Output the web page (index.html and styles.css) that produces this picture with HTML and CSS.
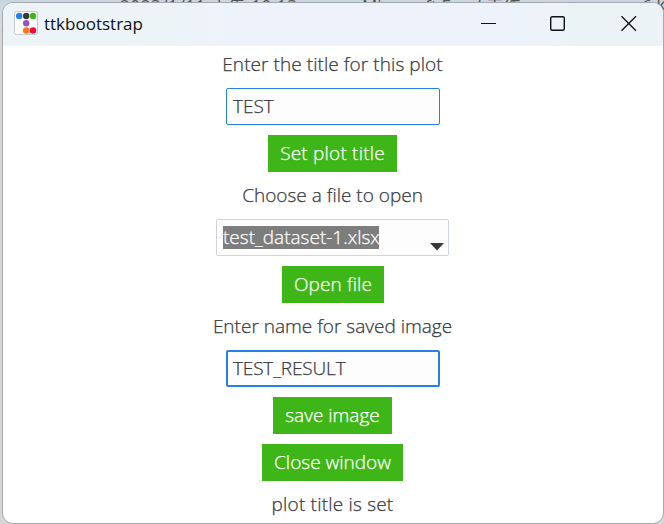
FILE: index.html
```html
<!DOCTYPE html>
<html lang="en">
<head>
<meta charset="utf-8">
<title>ttkbootstrap</title>
<link rel="stylesheet" href="styles.css">
</head>
<body>
<div class="behind date">2023/1/11 下午 10:13</div>
<div class="behind kind">Microsoft Excel 工作...</div>
<div class="behind size">6 KB</div>
<main class="window">
  <header class="titlebar">
    <svg class="logo" width="24" height="24" viewBox="0 0 24 24">
      <rect x=".5" y=".5" width="23" height="23" rx="2" fill="#fff" stroke="#c6c9ca"/>
      <circle cx="5.2" cy="5" r="3.2" fill="#2780e3"/><circle cx="12.2" cy="5" r="3.2" fill="#373a3c"/><circle cx="19" cy="5" r="3.2" fill="#3fb618"/>
      <circle cx="12.2" cy="12.2" r="3.2" fill="#9954bb"/><circle cx="12.2" cy="19.5" r="3.2" fill="#ff7518"/><circle cx="19" cy="19.5" r="3.2" fill="#ff0039"/>
    </svg>
    <span class="caption">ttkbootstrap</span>
    <svg class="controls" width="156" height="16" viewBox="0 0 156 16" fill="none" stroke="#111">
      <path d="M0 7.5h15"/>
      <rect x="69.7" y=".7" width="13.6" height="13.6" rx="1.5" stroke-width="1.4"/>
      <path d="M140.5 .2l14.5 14.5M155 .2l-14.5 14.5" stroke-width="1.3"/>
    </svg>
  </header>
  <section class="form">
    <div class="label"><span class="t1">Enter the title for this plot</span></div>
    <div class="entry"><span>TEST</span></div>
    <div class="button b1"><span class="t3">Set plot title</span></div>
    <div class="label"><span>Choose a file to open</span></div>
    <div class="combo"><span class="selected"><span>test_dataset-1.xlsx</span></span>
      <svg class="arrow" width="14" height="8" viewBox="0 0 14 8"><path d="M0 0h14L7 7.5z" fill="#373a3c"/></svg>
    </div>
    <div class="button b2"><span class="t6">Open file</span></div>
    <div class="label"><span>Enter name for saved image</span></div>
    <div class="entry focused"><span class="t8">TEST_RESULT</span></div>
    <div class="button b3"><span>save image</span></div>
    <div class="button b4"><span>Close window</span></div>
    <div class="label"><span class="t11">plot title is set</span></div>
  </section>
</main>
</body>
</html>
```
FILE: styles.css
```css
* { box-sizing: border-box; }
body {
  margin: 0; width: 664px; height: 524px; overflow: hidden; position: relative;
  padding: 2px 0 0 2px; background: linear-gradient(#c9d6e2 0, #d2dce5 26px, #d6d6d6 27px);
  font-family: "Open Sans", "Noto Sans", "Noto Sans CJK SC", sans-serif;
}
.behind { position: absolute; top: -6px; font-size: 17px; line-height: 24px; color: #555; white-space: nowrap; }
.date { left: 120px; letter-spacing: .6px; }
.kind { left: 362px; }
.size { left: 642px; }
.window {
  position: relative; width: 662px; height: 522px; overflow: hidden;
  border: 1px solid #a5a9ac; border-radius: 11px; background: #fff;
}
.titlebar {
  height: 43px; display: flex; align-items: center; padding: 0 26px 0 11px;
  background: linear-gradient(90deg, #ecf4f7 0, #ecf4f7 24%, #eef3fb 36%, #eef3fb 76%, #ecf3f7 88%);
}
.logo { flex: none; margin-bottom: 3px; }
.caption { margin: 0 0 2px 6px; font-size: 17px; line-height: 24px; color: #111; }
.controls { margin: 0 0 2px auto; }
.form {
  display: flex; flex-direction: column; align-items: center; gap: 10px; padding: 5px 1px 0 0;
  font-size: 19px; font-weight: 300; color: #373a3c; white-space: nowrap;
  -webkit-text-stroke: .25px currentColor;
}
.label { height: 27px; line-height: 27px; }
.entry, .combo { height: 37px; display: flex; align-items: center; border: 1px solid #2780e3; border-radius: 2px; background: #fdfdfd; }
.entry { width: 214px; padding: 0 0 2px 6px; position: relative; left: .5px; }
.focused { border-width: 2px; padding-left: 5px; }
.combo { width: 233px; border-color: #ced4da; padding: 0 4px 0 6px; justify-content: space-between; }
.selected { width: 156px; height: 23px; line-height: 23px; background: #7d7d7d; color: #fff; }
.arrow { margin-top: 19px; }
.button { height: 37px; line-height: 37px; text-align: center; background: #3fb618; color: #fff; }
.b1 { width: 129px; }
.b2 { width: 102px; position: relative; left: .5px; }
.b3 { width: 119px; }
.b4 { width: 141px; }
.t1 { letter-spacing: .07px; }
.t3, .t11 { letter-spacing: .2px; }
.t6 { letter-spacing: .1px; }
.t8 { letter-spacing: -.15px; }
```
